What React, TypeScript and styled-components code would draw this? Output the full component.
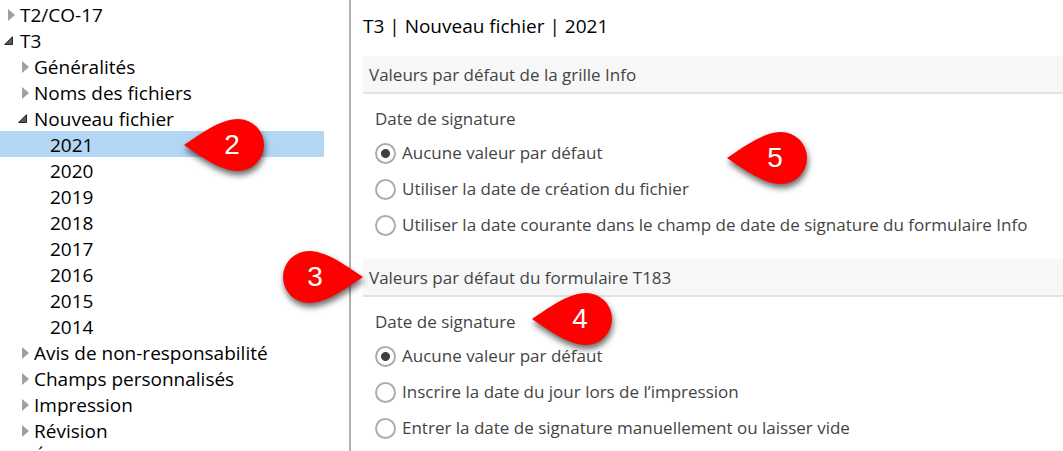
import React, { useState } from "react";
import styled, { createGlobalStyle } from "styled-components";

const GlobalStyle = createGlobalStyle`
  *, *::before, *::after { box-sizing: border-box; }
  body {
    margin: 0;
    background: #fff;
    font-family: "Open Sans", "Segoe UI", sans-serif;
    color: #000;
  }
`;

const Page = styled.div`
  display: flex;
  height: 100vh;
  overflow: hidden;
`;

const Sidebar = styled.nav`
  flex: 0 0 351px;
  padding: 1px 25px 0 0;
  border-right: 2px solid #b0b0b0;
`;

const Tree = styled.ul`
  list-style: none;
  margin: 0;
  padding: 0;
`;

const TreeItem = styled.li`
  position: relative;
`;

const TreeButton = styled.button<{ $level: number; $selected: boolean }>`
  display: flex;
  align-items: center;
  width: 100%;
  height: 26px;
  padding: 0 0 0 ${(p) => [4, 18, 34][p.$level]}px;
  border: 0;
  border-radius: 1px;
  background: ${(p) => (p.$selected ? "#b2d6f3" : "transparent")};
  color: inherit;
  font: 19px/24px "Open Sans", "Segoe UI", sans-serif;
  text-align: left;
  white-space: nowrap;
`;

const TreeText = styled.span`
  padding-top: 2px;
`;

const Arrow = styled.svg`
  flex: none;
  width: 16px;
  height: 26px;
`;

const Content = styled.main`
  flex: 1;
  min-width: 0;
  padding: 12px 0 0 12px;
`;

const Title = styled.h1`
  margin: 0 0 16px;
  font-size: 19px;
  line-height: 28px;
  font-weight: 400;
`;

const Section = styled.section`
  position: relative;
  margin-bottom: 16px;
  color: #444;
  font-size: 17px;
  line-height: 24px;
`;

const SectionHeader = styled.h2`
  margin: 0;
  padding: 7px 6px 5px;
  border-bottom: 2px solid #e2e2e2;
  background: #f7f7f7;
  font-size: 17px;
  line-height: 24px;
  font-weight: 400;
`;

const Group = styled.div`
  padding: 13px 0 0 12px;
`;

const GroupLabel = styled.div`
  margin-bottom: 4px;
`;

const Option = styled.label`
  display: flex;
  align-items: center;
  gap: 6px;
  height: 36px;
`;

const Radio = styled.input`
  appearance: none;
  flex: none;
  width: 21px;
  height: 21px;
  margin: 0;
  border: 2px solid #acacac;
  border-radius: 50%;
  background: #fff;
  &:checked {
    background: radial-gradient(circle, #404040 4px, #fff 5px);
  }
`;

const PinBox = styled.div<{ $x: number; $y: number }>`
  position: absolute;
  z-index: 1;
  left: ${(p) => p.$x}px;
  top: ${(p) => p.$y}px;
  width: 80px;
  height: 52px;
  pointer-events: none;
`;

const PinShape = styled.svg<{ $flip?: boolean }>`
  position: absolute;
  inset: 0;
  overflow: visible;
  filter: drop-shadow(1px 4px 3px rgba(0, 0, 0, 0.6));
  path {
    transform-origin: 40px 26px;
    transform: ${(p) => (p.$flip ? "scaleX(-1)" : "none")};
  }
`;

const PinNumber = styled.span<{ $flip?: boolean }>`
  position: relative;
  display: block;
  padding: ${(p) => (p.$flip ? "0 16px 0 0" : "0 0 0 16px")};
  color: #fff;
  font: 28px/52px "Liberation Sans", Arial, sans-serif;
  text-align: center;
`;

interface PinProps {
  n: number;
  x: number;
  y: number;
  flip?: boolean;
}

function Pin({ n, x, y, flip }: PinProps) {
  return (
    <PinBox $x={x} $y={y}>
      <PinShape $flip={flip} width="80" height="52" viewBox="0 0 80 52" aria-hidden="true">
        <path
          d="M0 26C15 16 36 0 54 0A26 26 0 0 1 54 52C36 52 15 36 0 26Z"
          fill="#f00"
        />
      </PinShape>
      <PinNumber $flip={flip}>{n}</PinNumber>
    </PinBox>
  );
}

type ArrowState = "open" | "closed" | "none";

const nodes: [string, number, ArrowState][] = [
  ["T2/CO-17", 0, "closed"],
  ["T3", 0, "open"],
  ["Généralités", 1, "closed"],
  ["Noms des fichiers", 1, "closed"],
  ["Nouveau fichier", 1, "open"],
  ["2021", 2, "none"],
  ["2020", 2, "none"],
  ["2019", 2, "none"],
  ["2018", 2, "none"],
  ["2017", 2, "none"],
  ["2016", 2, "none"],
  ["2015", 2, "none"],
  ["2014", 2, "none"],
  ["Avis de non-responsabilité", 1, "closed"],
  ["Champs personnalisés", 1, "closed"],
  ["Impression", 1, "closed"],
  ["Révision", 1, "closed"],
  ["É", 1, "closed"],
];

function TreeArrow({ state }: { state: ArrowState }) {
  return (
    <Arrow viewBox="0 0 16 26" aria-hidden="true">
      {state === "closed" && <path d="M4 8L11 14L4 20Z" fill="#a0a0a0" />}
      {state === "open" && (
        <path d="M8.5 9.7V17.5H0.7Z" fill="#595959" stroke="#262626" />
      )}
    </Arrow>
  );
}

interface RadioGroupProps {
  name: string;
  label: string;
  options: string[];
}

function RadioGroup({ name, label, options }: RadioGroupProps) {
  const [value, setValue] = useState(0);
  return (
    <Group role="radiogroup" aria-labelledby={`${name}-label`}>
      <GroupLabel id={`${name}-label`}>{label}</GroupLabel>
      {options.map((text, i) => (
        <Option key={text}>
          <Radio type="radio" name={name} checked={value === i} onChange={() => setValue(i)} />
          {text}
        </Option>
      ))}
    </Group>
  );
}

export default function App() {
  const [selected, setSelected] = useState("2021");
  return (
    <Page>
      <GlobalStyle />
      <Sidebar>
        <Tree>
          {nodes.map(([text, level, state]) => (
            <TreeItem key={text}>
              <TreeButton
                type="button"
                $level={level}
                $selected={text === selected}
                aria-expanded={state === "none" ? undefined : state === "open"}
                onClick={() => setSelected(text)}
              >
                <TreeArrow state={state} />
                <TreeText>{text}</TreeText>
              </TreeButton>
              {text === "2021" && <Pin n={2} x={184} y={-12} />}
            </TreeItem>
          ))}
        </Tree>
      </Sidebar>
      <Content>
        <Title>T3 | Nouveau fichier | 2021</Title>
        <Section>
          <SectionHeader>Valeurs par défaut de la grille Info</SectionHeader>
          <RadioGroup
            name="info"
            label="Date de signature"
            options={[
              "Aucune valeur par défaut",
              "Utiliser la date de création du fichier",
              "Utiliser la date courante dans le champ de date de signature du formulaire Info",
            ]}
          />
          <Pin n={5} x={364} y={76} />
        </Section>
        <Section>
          <SectionHeader>Valeurs par défaut du formulaire T183</SectionHeader>
          <RadioGroup
            name="t183"
            label="Date de signature"
            options={[
              "Aucune valeur par défaut",
              "Inscrire la date du jour lors de l’impression",
              "Entrer la date de signature manuellement ou laisser vide",
            ]}
          />
          <Pin n={3} x={-80} y={-8} flip />
          <Pin n={4} x={169} y={34} />
        </Section>
      </Content>
    </Page>
  );
}
